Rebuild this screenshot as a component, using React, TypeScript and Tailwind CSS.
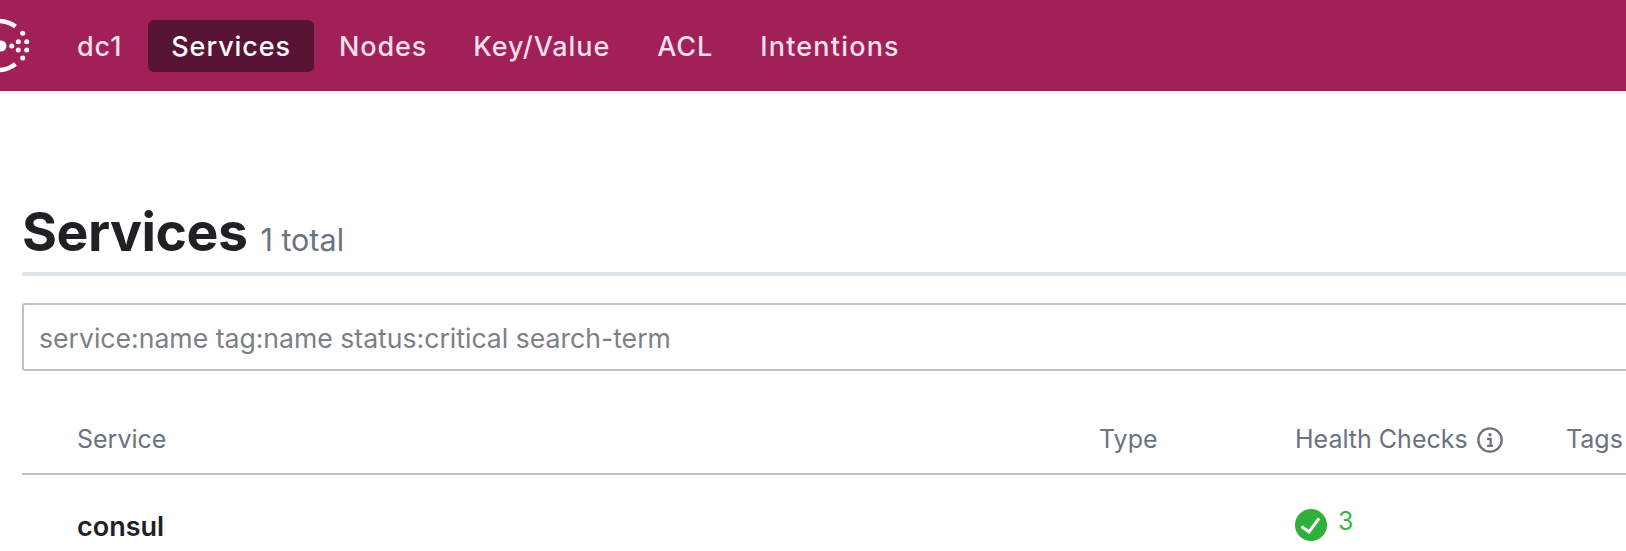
const font = "font-['Inter','Liberation_Sans',sans-serif]";

function ConsulLogo() {
  return (
    <svg viewBox="0 15 30 60" className="h-[60px] w-[30px] shrink-0" fill="#fff">
      <path d="M15.5 25.5A27 27 0 0 0 0 20" fill="none" stroke="#fff" strokeWidth="4.5" />
      <path d="M15.5 63A27 27 0 0 1 0 69" fill="none" stroke="#fff" strokeWidth="4.5" />
      <circle cx="1" cy="45" r="5.5" />
      <circle cx="11.7" cy="45" r="2.5" />
      <circle cx="22.7" cy="32.3" r="2.5" />
      <circle cx="18.3" cy="40.7" r="2.5" />
      <circle cx="26.7" cy="40.7" r="2.5" />
      <circle cx="18.3" cy="49" r="2.5" />
      <circle cx="26.7" cy="49" r="2.5" />
      <circle cx="22.7" cy="57" r="2.5" />
    </svg>
  );
}

export default function App() {
  return (
    <div className={`h-[551px] w-[1626px] overflow-hidden bg-white ${font}`}>
      <header className="flex h-[91px] items-center bg-[#a02057]">
        <ConsulLogo />
        <nav className="ml-[47px] flex items-center text-[27px] font-medium tracking-[0.9px] text-[#f5dfe9]">
          <a className="mr-[26px] pt-[4px]">dc1</a>
          <a className="mr-[25px] flex h-[52px] items-center rounded-[6px] bg-[#581533] px-[23px] pt-[4px] text-white">Services</a>
          <a className="mr-[46px] pt-[4px]">Nodes</a>
          <a className="mr-[47px] pt-[4px]">Key/Value</a>
          <a className="mr-[47px] pt-[4px]">ACL</a>
          <a className="pt-[4px] tracking-[1.2px]">Intentions</a>
        </nav>
      </header>
      <main className="pl-[22px]">
        <div className="mt-[110px] flex h-[75px] items-baseline border-b-4 border-[#dfe3ea]">
          <h1 className="text-[53.5px] leading-[62px] font-bold tracking-[-0.5px] text-[#1f2125]">Services</h1>
          <span className="ml-[13px] text-[30.5px] text-[#6b7280]">1 total</span>
        </div>
        <div className="mt-[27px] flex h-[68px] items-center rounded-l-[3px] border-2 border-r-0 border-[#bac1cc] pt-[3px] pl-[15px] text-[26.6px] text-[#7c7f85]">
          service:name tag:name status:critical search-term
        </div>
        <div className="mt-[24px] flex h-[80px] items-center border-b-2 border-[#bac1cc] pt-[12px] text-[25px] text-[#6b7280]">
          <span className="ml-[55px] w-[1022px]">Service</span>
          <span className="w-[196px]">Type</span>
          <span className="flex w-[271px] items-center">
            Health Checks
            <svg viewBox="0 0 24 24" className="ml-[8px] h-[28px] w-[28px]" fill="none" stroke="#6b7280" strokeWidth="2">
              <circle cx="12" cy="12" r="10" />
              <circle cx="12" cy="7.5" r="1.4" fill="#6b7280" stroke="none" />
              <path d="M9.5 11h3v6M9.5 17h5" />
            </svg>
          </span>
          <span>Tags</span>
        </div>
        <div className="flex items-center pt-[28px]">
          <span className="ml-[55px] w-[1218px] pt-[4px] text-[27px] font-semibold text-[#1f2125]">consul</span>
          <span className="flex items-center text-[25px] text-[#3bb54a]">
            <svg viewBox="0 0 32 32" className="h-[32px] w-[32px]">
              <circle cx="16" cy="16" r="16" fill="#2eb039" />
              <path d="M6.5 17.5l7.5 5.5 10-13.5" fill="none" stroke="#fff" strokeWidth="3" />
            </svg>
            <span className="ml-[11px] pb-[7px]">3</span>
          </span>
        </div>
      </main>
    </div>
  );
}
